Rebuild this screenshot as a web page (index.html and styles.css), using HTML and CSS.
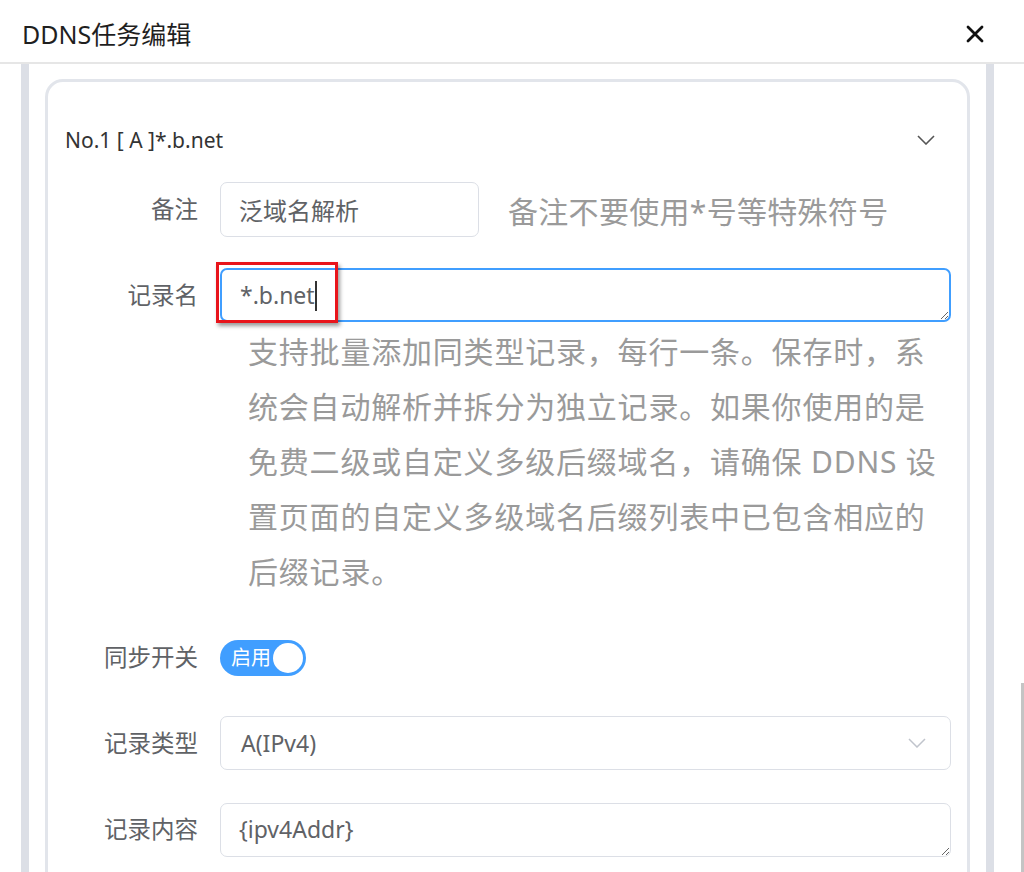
FILE: index.html
```html
<!DOCTYPE html>
<html lang="zh-CN">
<head>
<meta charset="utf-8">
<title>DDNS任务编辑</title>
<link rel="stylesheet" href="styles.css">
</head>
<body>
<div class="dialog">
  <header class="dlg-head">
    <h1 class="dlg-title">DDNS任务编辑</h1>
    <button class="close" aria-label="关闭">
      <svg width="18" height="18" viewBox="0 0 18 18"><path d="M2 2L16 16M16 2L2 16" stroke="#111" stroke-width="2.8" stroke-linecap="round" fill="none"/></svg>
    </button>
  </header>
  <div class="dlg-body">
    <div class="rail"></div>
    <section class="card">
      <div class="card-head">
        <span class="card-title">No.1 [ A ]*.b.net</span>
        <svg class="card-chev" width="18" height="10" viewBox="0 0 18 10"><path d="M1 1L9 9L17 1" stroke="#555" stroke-width="1.6" fill="none"/></svg>
      </div>

      <div class="row row-note">
        <label class="lbl lbl-55">备注</label>
        <div class="ctrl ctrl-inline">
          <input class="input input-note" value="泛域名解析">
          <span class="hint">备注不要使用*号等特殊符号</span>
        </div>
      </div>

      <div class="row row-name">
        <label class="lbl lbl-54">记录名</label>
        <div class="ctrl">
          <div class="ta-wrap">
            <textarea class="textarea is-focus">*.b.net</textarea>
            <span class="caret"></span>
            <div class="mark"></div>
          </div>
          <p class="help">支持批量添加同类型记录，每行一条。保存时，系统会自动解析并拆分为独立记录。如果你使用的是免费二级或自定义多级后缀域名，请确保 DDNS 设置页面的自定义多级域名后缀列表中已包含相应的后缀记录。</p>
        </div>
      </div>

      <div class="row row-switch">
        <label class="lbl lbl-35">同步开关</label>
        <div class="ctrl">
          <span class="switch"><span class="switch-text">启用</span><span class="knob"></span></span>
        </div>
      </div>

      <div class="row row-type">
        <label class="lbl lbl-54">记录类型</label>
        <div class="ctrl">
          <div class="select">
            <span>A(IPv4)</span>
            <svg width="18" height="10" viewBox="0 0 18 10"><path d="M1 1L9 9L17 1" stroke="#c0c4cc" stroke-width="1.5" fill="none"/></svg>
          </div>
        </div>
      </div>

      <div class="row row-content">
        <label class="lbl lbl-53">记录内容</label>
        <div class="ctrl">
          <textarea class="textarea">{ipv4Addr}</textarea>
        </div>
      </div>
    </section>
    <div class="rail"></div>
  </div>
  <div class="scrollbar"></div>
</div>
</body>
</html>
```
FILE: styles.css
```css
* { box-sizing: border-box; }
html, body { margin: 0; padding: 0; background: #fff; }
body {
  font-family: "Noto Sans", "Noto Sans CJK SC", sans-serif;
  color: #606266;
  width: 1024px;
  height: 872px;
  overflow: hidden;
}
.dialog { position: relative; height: 872px; overflow: hidden; }

.dlg-head {
  height: 64px;
  border-bottom: 2px solid #e6e6e6;
  display: flex;
  align-items: center;
  justify-content: space-between;
  padding: 0 40px 0 22px;
}
.dlg-title {
  margin: 0;
  font-size: 25px;
  font-weight: 400;
  color: #1f1f1f;
  line-height: 1;
  padding-top: 6px;
}
.close {
  border: 0;
  background: none;
  padding: 0;
  width: 18px;
  height: 18px;
  margin-top: 6px;
  display: flex;
}

.dlg-body {
  display: flex;
  padding-left: 21px;
  height: 808px;
}
.rail {
  width: 8px;
  background: #dcdfe6;
  flex: none;
}
.card {
  width: 925px;
  margin: 15px 16px 0;
  border: 3px solid #e2e5eb;
  border-radius: 18px;
  height: 900px;
  padding: 0 16px 0 0;
  flex: none;
}
.card-head {
  display: flex;
  align-items: center;
  justify-content: space-between;
  height: 28px;
  margin: 44px 16px 28px 17px;
}
.card-title {
  font-size: 21px;
  color: #333;
  line-height: 28px;
}

.row { display: flex; align-items: flex-start; gap: 22px; }
.lbl {
  width: 150px;
  flex: none;
  text-align: right;
  font-size: 23.5px;
  color: #606266;
}
.lbl-55 { line-height: 55px; }
.lbl-54 { line-height: 54px; }
.lbl-53 { line-height: 53px; }
.lbl-35 { line-height: 35px; }
.ctrl { flex: 1; min-width: 0; }
.ctrl-inline { display: flex; align-items: center; }

.input {
  height: 55px;
  border: 1.5px solid #dcdfe6;
  border-radius: 7px;
  padding: 0 18px;
  font: inherit;
  font-size: 24px;
  color: #606266;
  outline: none;
}
.input-note { width: 259px; }
.hint {
  margin-left: 29px;
  font-size: 30px;
  letter-spacing: 0.3px;
  color: #9a9a9a;
  white-space: nowrap;
}

.row-name { margin-top: 31px; }
.ta-wrap { position: relative; }
.textarea {
  display: block;
  width: 100%;
  height: 54px;
  border: 1.5px solid #dcdfe6;
  border-radius: 7px;
  padding: 11px 18px;
  font: inherit;
  font-size: 23px;
  line-height: 29px;
  color: #606266;
  resize: vertical;
  outline: none;
  overflow: hidden;
}
.textarea.is-focus { border: 2px solid #409eff; }
.caret {
  position: absolute;
  left: 95px;
  top: 13px;
  width: 1.5px;
  height: 30px;
  background: #333;
}
.mark {
  position: absolute;
  left: -4px;
  top: -6px;
  width: 122px;
  height: 61px;
  border: 3px solid #e8141b;
  box-shadow: 2px 3px 4px rgba(0,0,0,.4);
  pointer-events: none;
}
.help {
  margin: 2px 0 0 28px;
  font-size: 30px;
  letter-spacing: 0.8px;
  line-height: 55px;
  color: #9a9a9a;
  width: 703px;
}

.row-switch { margin-top: 41px; }
.switch {
  display: inline-flex;
  align-items: center;
  justify-content: space-between;
  width: 86px;
  height: 36px;
  border-radius: 18px;
  background: #409eff;
  padding: 0 3px 0 11px;
}
.switch-text { color: #fff; font-size: 20px; line-height: 1; }
.knob {
  width: 30px;
  height: 30px;
  border-radius: 50%;
  background: #fff;
}

.row-type { margin-top: 40px; }
.select {
  height: 54px;
  border: 1.5px solid #dcdfe6;
  border-radius: 7px;
  padding: 0 24px 0 20px;
  display: flex;
  align-items: center;
  justify-content: space-between;
  font-size: 23px;
  color: #606266;
}

.row-content { margin-top: 33px; }

.scrollbar {
  position: absolute;
  right: 0;
  top: 683px;
  width: 3px;
  height: 200px;
  background: #c4c4c4;
}
```
